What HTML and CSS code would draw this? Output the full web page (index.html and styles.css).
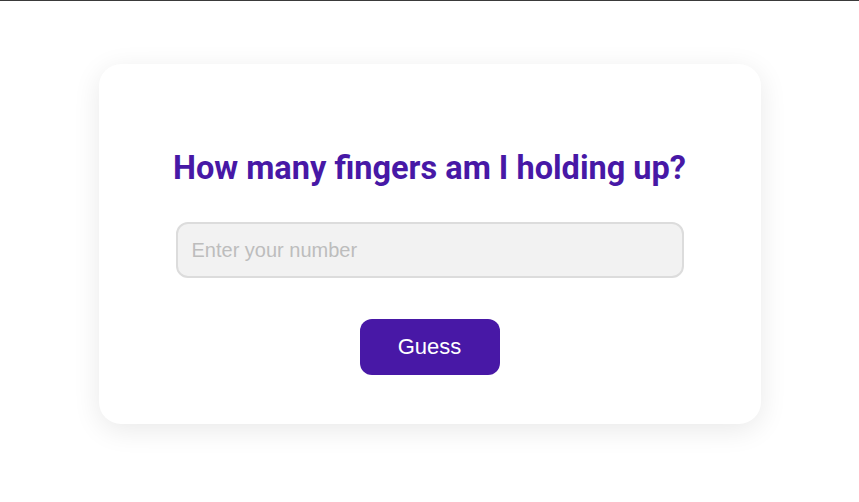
FILE: index.html
```html
<!DOCTYPE html>
<html>
<head>
<meta charset="utf-8">
<link rel="stylesheet" href="styles.css">
</head>
<body>
<main class="page">
  <section class="card">
    <h1 class="title">How many fingers am I holding up?</h1>
    <input class="guess-input" type="text" placeholder="Enter your number">
    <button class="guess-btn">Guess</button>
  </section>
</main>
</body>
</html>
```
FILE: styles.css
```css
html, body {
  margin: 0;
  padding: 0;
  background: #fff;
}
body {
  border-top: 1px solid #3a3a3a;
  font-family: "Liberation Sans", Arial, sans-serif;
}
.page {
  box-sizing: border-box;
  min-height: 501px;
  display: flex;
  justify-content: center;
  align-items: flex-start;
  padding-top: 63px;
}
.card {
  box-sizing: border-box;
  width: 662px;
  height: 360px;
  background: #fff;
  border-radius: 22px;
  box-shadow: 0 6px 28px rgba(0, 0, 0, 0.09);
  padding: 86px 77px 0;
  display: flex;
  flex-direction: column;
  align-items: center;
}
.title {
  margin: 0;
  font-family: Roboto, "Noto Sans", sans-serif;
  font-weight: 700;
  font-size: 32.5px;
  line-height: 36px;
  color: #4718a6;
  white-space: nowrap;
}
.guess-input {
  box-sizing: border-box;
  width: 100%;
  height: 56px;
  margin-top: 36px;
  border: 2px solid #dcdcdc;
  border-radius: 12px;
  background: #f2f2f2;
  padding: 0 14px;
  font-family: "Liberation Sans", Arial, sans-serif;
  font-size: 20px;
  color: #333;
  outline: none;
}
.guess-input::placeholder {
  color: #bdbdbd;
}
.guess-btn {
  margin-top: 41px;
  width: 140px;
  height: 56px;
  border: none;
  border-radius: 12px;
  background: #4818a6;
  color: #fff;
  font-family: "Liberation Sans", Arial, sans-serif;
  font-size: 22px;
  cursor: pointer;
}
```
